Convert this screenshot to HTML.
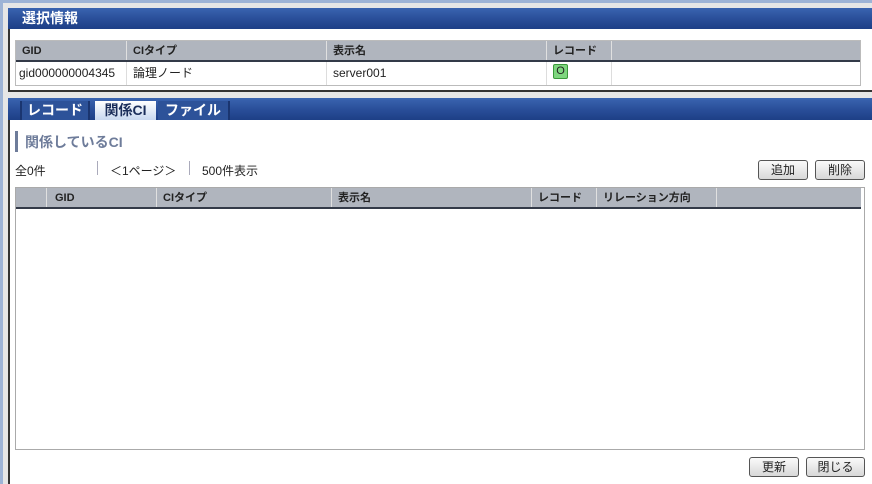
<!DOCTYPE html>
<html><head><meta charset="utf-8"><style>
*{margin:0;padding:0;box-sizing:border-box}
body{width:872px;height:484px;background:#e6e6e6;font-family:"Liberation Sans","Noto Sans CJK JP",sans-serif;font-size:12px;color:#222;position:relative;overflow:hidden}
.a{position:absolute}
.bar{background:linear-gradient(#3a64b0,#2a4f9a 50%,#1d3f86);}
.th{background:#b0b5be;border-bottom:2px solid #333a48;font-weight:bold;font-size:11px;color:#222;height:21px;line-height:20px}
.th span,.tr span{position:absolute;top:0;padding-left:6px;height:100%;border-left:1px solid #e0e0e0}
.btn{position:absolute;height:20px;border:1px solid #555;border-radius:3px;background:linear-gradient(#fafafa,#d8d8d8);font-size:12px;text-align:center;line-height:18px}
</style></head><body>
<div class="a" style="left:0;top:0;width:3px;height:484px;background:#9db3d6"></div>
<div class="a" style="left:0;top:0;width:872px;height:3px;background:#9db3d6"></div>
<!-- panel 1 -->
<div class="a bar" style="left:8px;top:8px;width:864px;height:21px"></div>
<div class="a" style="left:22px;top:8px;color:#fff;font-weight:bold;font-size:14px;line-height:20px">選択情報</div>
<div class="a" style="left:8px;top:29px;width:864px;height:63px;background:#fff;border-left:2px solid #333;border-bottom:2px solid #333"></div>
<div class="a" style="left:15px;top:40px;width:846px;height:46px;border:1px solid #bbb;background:#fff">
<div class="a th" style="left:0;top:0;width:844px">
<span style="left:0;border:none">GID</span><span style="left:110px;">CIタイプ</span><span style="left:310px">表示名</span><span style="left:530px">レコード</span><span style="left:595px"></span></div>
<div class="a tr" style="left:0;top:21px;width:844px;height:23px;line-height:22px;font-size:12px">
<span style="left:0;border:none;padding-left:3px">gid000000004345</span><span style="left:110px;border-color:#ddd">論理ノード</span><span style="left:310px;border-color:#ddd">server001</span><span style="left:530px;border-color:#ddd"><i style="display:inline-block;width:15px;height:15px;margin-top:2px;background:#7fd67f;border:1px solid #3a9a3a;border-radius:2px;font-style:normal;font-size:11px;line-height:13px;text-align:center;vertical-align:top">O</i></span><span style="left:595px;border-color:#ddd"></span></div>
</div>
<!-- panel 2 -->
<div class="a bar" style="left:8px;top:98px;width:864px;height:22px"></div>
<div class="a" style="left:20px;top:101px;width:70px;height:19px;background:#2d5299;border-left:2px solid #1a3570;border-right:2px solid #1a3570;color:#fff;font-weight:bold;font-size:14px;text-align:center;line-height:19px">レコード</div>
<div class="a" style="left:95px;top:101px;width:61px;height:19px;background:linear-gradient(#fff,#c8d8f0);color:#1a2d5a;font-weight:bold;font-size:14px;text-align:center;line-height:19px">関係CI</div>
<div class="a" style="left:158px;top:101px;width:72px;height:19px;background:#2d5299;border-right:2px solid #1a3570;color:#fff;font-weight:bold;font-size:14px;text-align:center;line-height:19px">ファイル</div>
<div class="a" style="left:8px;top:120px;width:864px;height:364px;background:#fff;border-left:2px solid #333"></div>
<div class="a" style="left:15px;top:131px;width:3px;height:21px;background:#6e7c9a"></div>
<div class="a" style="left:25px;top:132px;color:#6e7c9a;font-weight:bold;font-size:14px">関係しているCI</div>
<div class="a" style="left:15px;top:162px">全0件</div>
<div class="a" style="left:97px;top:161px;width:1px;height:14px;background:#aab"></div>
<div class="a" style="left:110px;top:162px">＜1ページ＞</div>
<div class="a" style="left:189px;top:161px;width:1px;height:14px;background:#aab"></div>
<div class="a" style="left:202px;top:162px">500件表示</div>
<div class="btn" style="left:758px;top:160px;width:50px">追加</div>
<div class="btn" style="left:815px;top:160px;width:50px">削除</div>
<div class="a" style="left:15px;top:187px;width:850px;height:263px;border:1px solid #aaa;background:#fff">
<div class="a th" style="left:0;top:0;width:845px">
<span style="left:0;border:none"></span><span style="left:30px;padding-left:8px">GID</span><span style="left:140px;padding-left:6px">CIタイプ</span><span style="left:315px">表示名</span><span style="left:515px">レコード</span><span style="left:580px">リレーション方向</span><span style="left:700px"></span></div>
</div>
<div class="btn" style="left:749px;top:457px;width:50px">更新</div>
<div class="btn" style="left:806px;top:457px;width:59px">閉じる</div>
</body></html>
